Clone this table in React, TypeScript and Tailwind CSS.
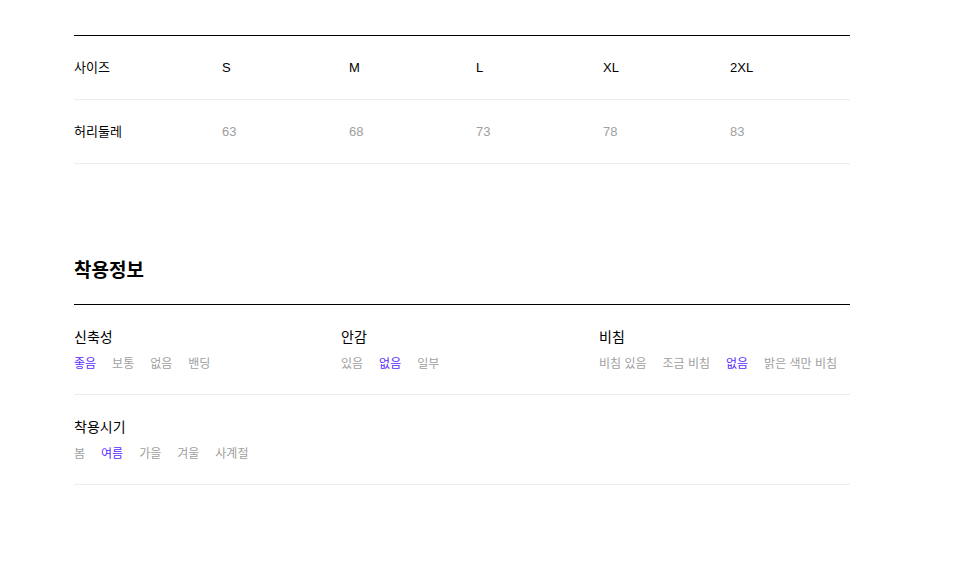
import React from "react";

const sizes = ["S", "M", "L", "XL", "2XL"];
const waist = ["63", "68", "73", "78", "83"];

type Group = { title: string; options: string[]; active: number };

const row1: Group[] = [
  { title: "신축성", options: ["좋음", "보통", "없음", "밴딩"], active: 0 },
  { title: "안감", options: ["있음", "없음", "일부"], active: 1 },
  { title: "비침", options: ["비침 있음", "조금 비침", "없음", "밝은 색만 비침"], active: 2 },
];
const row2: Group[] = [
  { title: "착용시기", options: ["봄", "여름", "가을", "겨울", "사계절"], active: 1 },
];

function GroupView({ g }: { g: Group }) {
  return (
    <div className="flex flex-col">
      <div className="text-[14px] leading-[20px] text-black">{g.title}</div>
      <div className="mt-[8px] flex gap-[16px] text-[12px] leading-[18px]">
        {g.options.map((o, i) => (
          <span key={o} className={i === g.active ? "text-[#5a2dff]" : "text-[#a0a0a0]"}>
            {o}
          </span>
        ))}
      </div>
    </div>
  );
}

export default function App() {
  return (
    <div
      className="bg-white min-h-[563px] w-full"
      style={{ fontFamily: '"Liberation Sans", "Noto Sans CJK KR", sans-serif' }}
    >
      <div className="ml-[74px] w-[776px] pt-[35px]">
        <div className="border-t border-black">
          <div className="grid h-[64px] grid-cols-[148px_127px_127px_127px_127px_1fr] items-center border-b border-[#ececec] text-[13px]">
            <div className="text-black">사이즈</div>
            {sizes.map((s) => (
              <div key={s} className="text-black">{s}</div>
            ))}
          </div>
          <div className="grid h-[64px] grid-cols-[148px_127px_127px_127px_127px_1fr] items-center border-b border-[#ececec] text-[13px]">
            <div className="text-black">허리둘레</div>
            {waist.map((s) => (
              <div key={s} className="text-[#a0a0a0]">{s}</div>
            ))}
          </div>
        </div>

        <div className="mt-[94px] pb-[20px] text-[19px] font-bold leading-[26px] text-black">착용정보</div>
        <div className="border-t border-black">
          <div className="grid h-[90px] grid-cols-[267px_258px_1fr] content-start pt-[22px] border-b border-[#ececec]">
            {row1.map((g) => (
              <GroupView key={g.title} g={g} />
            ))}
          </div>
          <div className="grid h-[90px] grid-cols-[267px_258px_1fr] content-start pt-[22px] border-b border-[#ececec]">
            {row2.map((g) => (
              <GroupView key={g.title} g={g} />
            ))}
          </div>
        </div>
      </div>
    </div>
  );
}
